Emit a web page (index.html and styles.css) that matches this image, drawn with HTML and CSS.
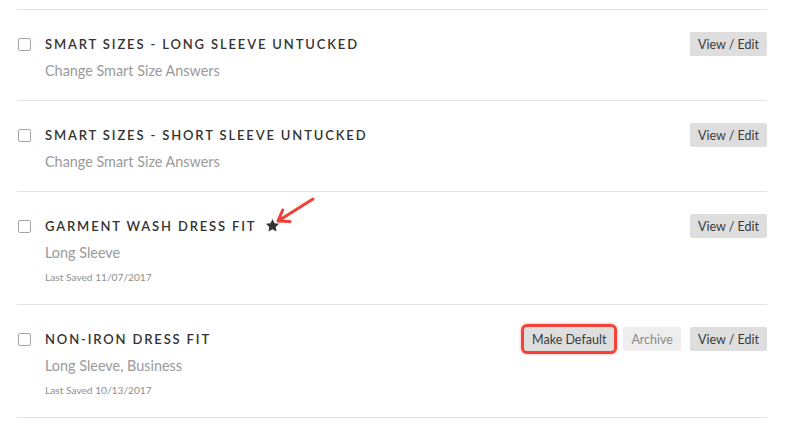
FILE: index.html
```html
<!DOCTYPE html>
<html lang="en">
<head>
	<meta charset="UTF-8">
	<title>Saved Fits</title>
	<link rel="stylesheet" href="styles.css">
</head>
<body>
	<ul class="fit-list">
		<li class="fit-row">
			<div class="fit-head">
				<span class="checkbox"></span>
				<h2 class="fit-title">Smart Sizes - Long Sleeve Untucked</h2>
				<div class="fit-actions">
					<button class="btn">View / Edit</button>
				</div>
			</div>
			<p class="fit-sub">Change Smart Size Answers</p>
		</li>

		<li class="fit-row">
			<div class="fit-head">
				<span class="checkbox"></span>
				<h2 class="fit-title">Smart Sizes - Short Sleeve Untucked</h2>
				<div class="fit-actions">
					<button class="btn">View / Edit</button>
				</div>
			</div>
			<p class="fit-sub">Change Smart Size Answers</p>
		</li>

		<li class="fit-row">
			<div class="fit-head">
				<span class="checkbox"></span>
				<h2 class="fit-title">Garment Wash Dress Fit</h2>
				<span class="default-star">
					<svg class="star" width="15" height="15" viewBox="0 0 24 24"><polygon points="12,1.5 15.2,8.3 22.5,9.2 17.1,14.2 18.5,21.6 12,18 5.5,21.6 6.9,14.2 1.5,9.2 8.8,8.3" fill="#333"/></svg>
					<!-- annotation arrow -->
					<svg class="arrow" width="44" height="30" viewBox="0 0 44 30"><path d="M38 3 L3 25 M7.7 14 L3 25 L15 25.6" fill="none" stroke="#ef4136" stroke-width="3" stroke-linecap="round" stroke-linejoin="round"/></svg>
				</span>
				<div class="fit-actions">
					<button class="btn">View / Edit</button>
				</div>
			</div>
			<p class="fit-sub">Long Sleeve</p>
			<p class="fit-saved">Last Saved 11/07/2017</p>
		</li>

		<li class="fit-row">
			<div class="fit-head">
				<span class="checkbox"></span>
				<h2 class="fit-title">Non-Iron Dress Fit</h2>
				<div class="fit-actions">
					<button class="btn highlight">Make Default</button>
					<button class="btn btn-light">Archive</button>
					<button class="btn">View / Edit</button>
				</div>
			</div>
			<p class="fit-sub">Long Sleeve, Business</p>
			<p class="fit-saved">Last Saved 10/13/2017</p>
		</li>
	</ul>
</body>
</html>
```

FILE: styles.css
```css
body {
	margin: 0;
	background-color: #fff;
	font-family: 'Lato', 'Liberation Sans', sans-serif;
	color: #333;
}

.fit-list {
	list-style-type: none;
	margin: 0 18px 0 17px;
	padding: 9px 0 0 0;
	border-bottom: 1px solid #e2e2e2;
}

.fit-row {
	border-top: 1px solid #e2e2e2;
	padding: 22px 0 19px 0;
}

.fit-head {
	display: flex;
	align-items: center;
	height: 24px;
}

.checkbox {
	width: 11px;
	height: 11px;
	margin-left: 1px;
	margin-right: 14px;
	border: 1px solid #a6a6a6;
	border-radius: 2px;
	background-color: #fff;
}

.fit-title {
	margin: 0;
	font-size: 13px;
	font-weight: 600;
	letter-spacing: 1.85px;
	text-transform: uppercase;
	color: #333;
}

.default-star {
	position: relative;
	display: inline-block;
	width: 15px;
	height: 15px;
	margin-left: 9px;
	margin-top: -2px;
}

.star {
	display: block;
}

.arrow {
	position: absolute;
	left: 10px;
	top: -22px;
}

.fit-actions {
	margin-left: auto;
	display: flex;
	gap: 9px;
}

.btn {
	height: 24px;
	padding: 0 8px;
	font-family: 'Lato', 'Liberation Sans', sans-serif;
	font-size: 12.5px;
	color: #3a3a3a;
	background-color: #dedede;
	border: none;
	border-radius: 2px;
	cursor: pointer;
}

.btn-light {
	background-color: #eeeeee;
	color: #8a8a8a;
}

.highlight {
	box-shadow: 0 0 0 3px #f2433b, 0 0 3px 3px rgba(242, 67, 59, 0.5);
	border-radius: 3px;
}

.fit-sub {
	margin: 5px 0 0 28px;
	font-size: 14.4px;
	line-height: 20px;
	color: #9a9a9a;
}

.fit-saved {
	margin: 6px 0 0 28px;
	font-size: 10.2px;
	line-height: 16px;
	color: #8f8f8f;
}
```
